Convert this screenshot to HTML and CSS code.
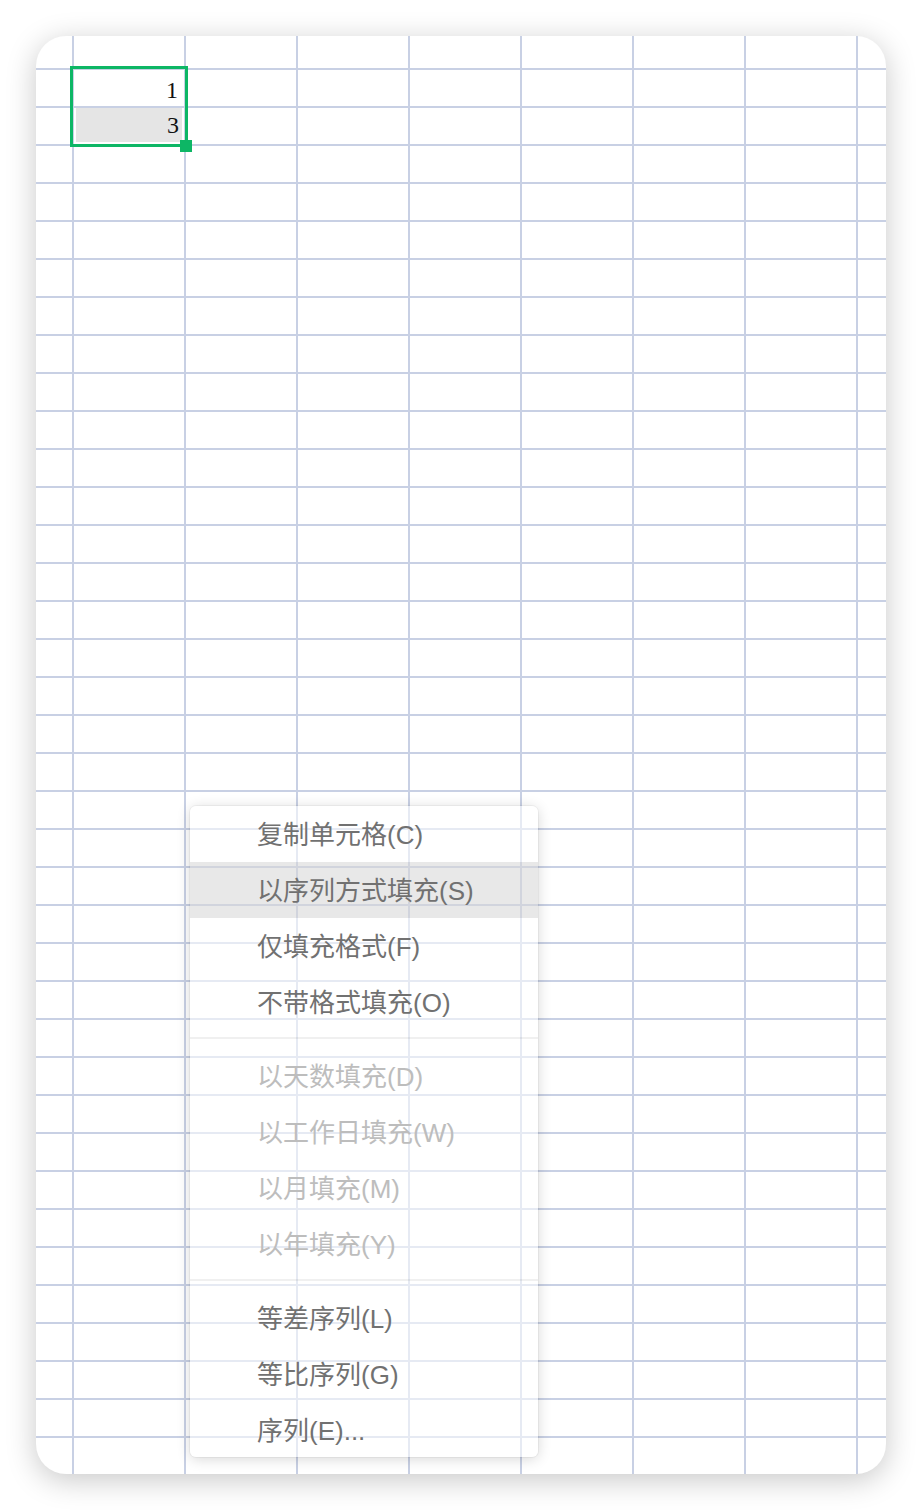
FILE: index.html
```html
<!DOCTYPE html>
<html lang="zh">
<head>
<meta charset="utf-8">
<title>填充选项</title>
<link rel="stylesheet" href="styles.css">
</head>
<body>
<div class="sheet">
  <div class="selection">
    <div class="cell cell-first">1</div>
    <div class="cell cell-active">3</div>
    <div class="fill-handle"></div>
  </div>

  <div class="menu">
    <div class="menu-item">复制单元格(C)</div>
    <div class="menu-item is-hover">以序列方式填充(S)</div>
    <div class="menu-item">仅填充格式(F)</div>
    <div class="menu-item">不带格式填充(O)</div>
    <div class="menu-sep"></div>
    <div class="menu-item is-disabled">以天数填充(D)</div>
    <div class="menu-item is-disabled">以工作日填充(W)</div>
    <div class="menu-item is-disabled">以月填充(M)</div>
    <div class="menu-item is-disabled">以年填充(Y)</div>
    <div class="menu-sep"></div>
    <div class="menu-item">等差序列(L)</div>
    <div class="menu-item">等比序列(G)</div>
    <div class="menu-item">序列(E)...</div>
  </div>
</div>
</body>
</html>
```

FILE: styles.css
```css
html, body {
  margin: 0;
  padding: 0;
  background: #ffffff;
}

body {
  width: 922px;
  height: 1510px;
  overflow: hidden;
  font-family: "Liberation Sans", "Noto Sans CJK SC", sans-serif;
}

.sheet {
  position: relative;
  margin: 36px 0 0 36px;
  width: 850px;
  height: 1438px;
  border-radius: 30px;
  overflow: hidden;
  background-color: #ffffff;
  background-image:
    linear-gradient(to right, #c8d0e4 2px, transparent 2px),
    linear-gradient(to bottom, #c8d0e4 2px, transparent 2px);
  background-size: 112px 100%, 100% 38px;
  background-position: 36px 0, 0 32px;
  box-shadow: 0 6px 30px rgba(0, 0, 0, 0.22);
}

/* selection */
.selection {
  position: absolute;
  left: 34px;
  top: 30px;
  width: 112px;
  height: 75px;
  border: 3px solid #0db665;
}

.cell {
  box-sizing: border-box;
  font-family: "Liberation Serif", serif;
  font-size: 24px;
  line-height: 26px;
  color: #111111;
  text-align: right;
}

.cell-first {
  height: 39px;
  padding: 8px 7px 0 0;
}

.cell-active {
  height: 34px;
  margin: 0 3px;
  padding: 4px 3px 0 0;
  background: #e5e5e5;
}

.fill-handle {
  position: absolute;
  right: -7px;
  bottom: -8px;
  width: 12px;
  height: 12px;
  background: #0db665;
}

/* context menu */
.menu {
  position: absolute;
  left: 154px;
  top: 770px;
  width: 348px;
  height: 651px;
  box-sizing: border-box;
  border-radius: 6px;
  background: rgba(255, 255, 255, 0.55);
  box-shadow: 0 2px 14px rgba(0, 0, 0, 0.16), 0 0 0 1px rgba(0, 0, 0, 0.04);
  overflow: hidden;
}

.menu-item {
  height: 56px;
  box-sizing: border-box;
  padding: 0 0 3px 67px;
  display: flex;
  align-items: center;
  font-size: 26px;
  color: #717171;
  white-space: nowrap;
}

.menu-item.is-hover {
  background: rgba(0, 0, 0, 0.09);
}

.menu-item.is-disabled {
  color: #bdbdbd;
}

.menu-sep {
  height: 18px;
  box-sizing: border-box;
  padding-top: 7px;
}

.menu-sep::before {
  content: "";
  display: block;
  height: 2px;
  background: rgba(0, 0, 0, 0.06);
}
```
